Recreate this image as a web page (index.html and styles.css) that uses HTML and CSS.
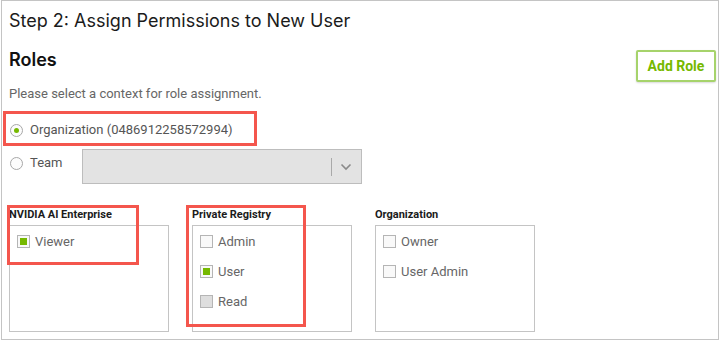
FILE: index.html
```html
<!doctype html>
<html>
<head>
  <link rel="stylesheet" href="styles.css">
</head>
<body>
  <div class="frame">
    <h1 class="title">Step 2: Assign Permissions to New User</h1>

    <div class="roles-head">
      <h2>Roles</h2>
      <button class="add-role">Add Role</button>
    </div>
    <p class="hint">Please select a context for role assignment.</p>

    <div class="radio-row org">
      <span class="radio checked"></span>
      <span class="radio-label">Organization (0486912258572994)</span>
    </div>
    <div class="radio-row team">
      <span class="radio"></span>
      <span class="radio-label team-label">Team</span>
      <div class="select">
        <span class="select-sep"></span>
        <svg class="chevron" width="12" height="8" viewBox="0 0 12 8">
          <path d="M1.5 1.5 L6 6 L10.5 1.5" fill="none" stroke="#8a8a8a" stroke-width="1.6"/>
        </svg>
      </div>
    </div>

    <div class="groups">
      <div class="group">
        <div class="group-title">NVIDIA AI Enterprise</div>
        <div class="group-box">
          <div class="check-row"><span class="check checked"></span>Viewer</div>
        </div>
      </div>
      <div class="group">
        <div class="group-title">Private Registry</div>
        <div class="group-box">
          <div class="check-row"><span class="check"></span>Admin</div>
          <div class="check-row"><span class="check checked"></span>User</div>
          <div class="check-row"><span class="check disabled"></span>Read</div>
        </div>
      </div>
      <div class="group">
        <div class="group-title">Organization</div>
        <div class="group-box">
          <div class="check-row"><span class="check"></span>Owner</div>
          <div class="check-row"><span class="check"></span>User Admin</div>
        </div>
      </div>
    </div>

    <!-- annotation boxes drawn over the screenshot -->
    <div class="mark mark-org"></div>
    <div class="mark mark-nvaie"></div>
    <div class="mark mark-registry"></div>
  </div>
</body>
</html>
```

FILE: styles.css
```css
body{
  margin: 0;
  background: #fff;
  font-family: Roboto, "Liberation Sans", sans-serif;
}
.frame{
  position: relative;
  box-sizing: border-box;
  width: 718px;
  margin-left: 1px;
  padding: 9px 2px 7px 7px;
  border: 1px solid #c4c4c4;
}
.title{
  margin: 0;
  font-family: Inter, Roboto, sans-serif;
  font-size: 18px;
  line-height: 22px;
  font-weight: 400;
  color: #1b1b1b;
}
.roles-head{
  display: flex;
  justify-content: space-between;
  align-items: flex-start;
  margin-top: 17px;
}
.roles-head h2{
  margin: 0;
  font-family: Inter, Roboto, sans-serif;
  font-size: 18px;
  line-height: 21px;
  font-weight: 600;
  color: #111;
}
.add-role{
  margin-top: 1px;
  width: 80px;
  height: 32px;
  background: #fff;
  border: 2px solid #a6d36b;
  border-radius: 2px;
  box-shadow: 0 1px 2px rgba(0,0,0,0.15);
  color: #76b900;
  font-family: Roboto, "Liberation Sans", sans-serif;
  font-size: 14px;
  font-weight: 700;
  padding: 0;
}
.hint{
  margin: 3px 0 0 0;
  font-size: 13px;
  line-height: 18px;
  color: #666;
}
.radio-row{
  display: flex;
  align-items: center;
  font-size: 13px;
  color: #555;
}
.radio-row.org{
  margin-top: 17px;
  height: 20px;
}
.radio-row.team{
  margin-top: 9px;
  align-items: flex-start;
}
.radio{
  box-sizing: border-box;
  width: 13px;
  height: 13px;
  margin-left: 1px;
  border: 1px solid #a8a8a8;
  border-radius: 50%;
  background: #fcfcfc;
  display: flex;
  align-items: center;
  justify-content: center;
}
.team .radio{
  margin-top: 8px;
}
.radio.checked::after{
  content: "";
  width: 5px;
  height: 5px;
  border-radius: 50%;
  background: #76b900;
}
.radio-label{
  margin-left: 7px;
  line-height: 20px;
}
.team-label{
  margin-top: 4px;
  width: 52px;
}
.select{
  box-sizing: border-box;
  width: 280px;
  height: 35px;
  background: #e3e3e3;
  border: 1px solid #bdbdbd;
  display: flex;
  align-items: center;
  justify-content: flex-end;
  padding-right: 9px;
}
.select-sep{
  width: 1px;
  height: 18px;
  background: #a9a9a9;
  margin-right: 8px;
}
.groups{
  display: flex;
  gap: 23px;
  margin-top: 24px;
}
.group{
  width: 160px;
}
.group-title{
  font-size: 11px;
  line-height: 14px;
  font-weight: 700;
  color: #1b1b1b;
  margin-bottom: 3px;
}
.group-box{
  box-sizing: border-box;
  height: 107px;
  border: 1px solid #c4c4c4;
  padding: 5px 7px;
  display: flex;
  flex-direction: column;
  gap: 10px;
}
.check-row{
  display: flex;
  align-items: center;
  height: 20px;
  font-size: 13px;
  color: #666;
}
.check{
  box-sizing: border-box;
  width: 13px;
  height: 13px;
  margin-right: 5px;
  border: 1px solid #b5b5b5;
  background: #f9f9f9;
  display: flex;
  align-items: center;
  justify-content: center;
}
.check.checked::after{
  content: "";
  width: 7px;
  height: 7px;
  background: #76b900;
}
.check.disabled{
  background: #dedede;
}
.mark{
  position: absolute;
  box-sizing: border-box;
  border: 3px solid #f4564d;
}
.mark-org{
  left: 1px;
  top: 110px;
  width: 254px;
  height: 35px;
}
.mark-nvaie{
  left: 5px;
  top: 204px;
  width: 132px;
  height: 60px;
}
.mark-registry{
  left: 184px;
  top: 204px;
  width: 120px;
  height: 122px;
}
```
